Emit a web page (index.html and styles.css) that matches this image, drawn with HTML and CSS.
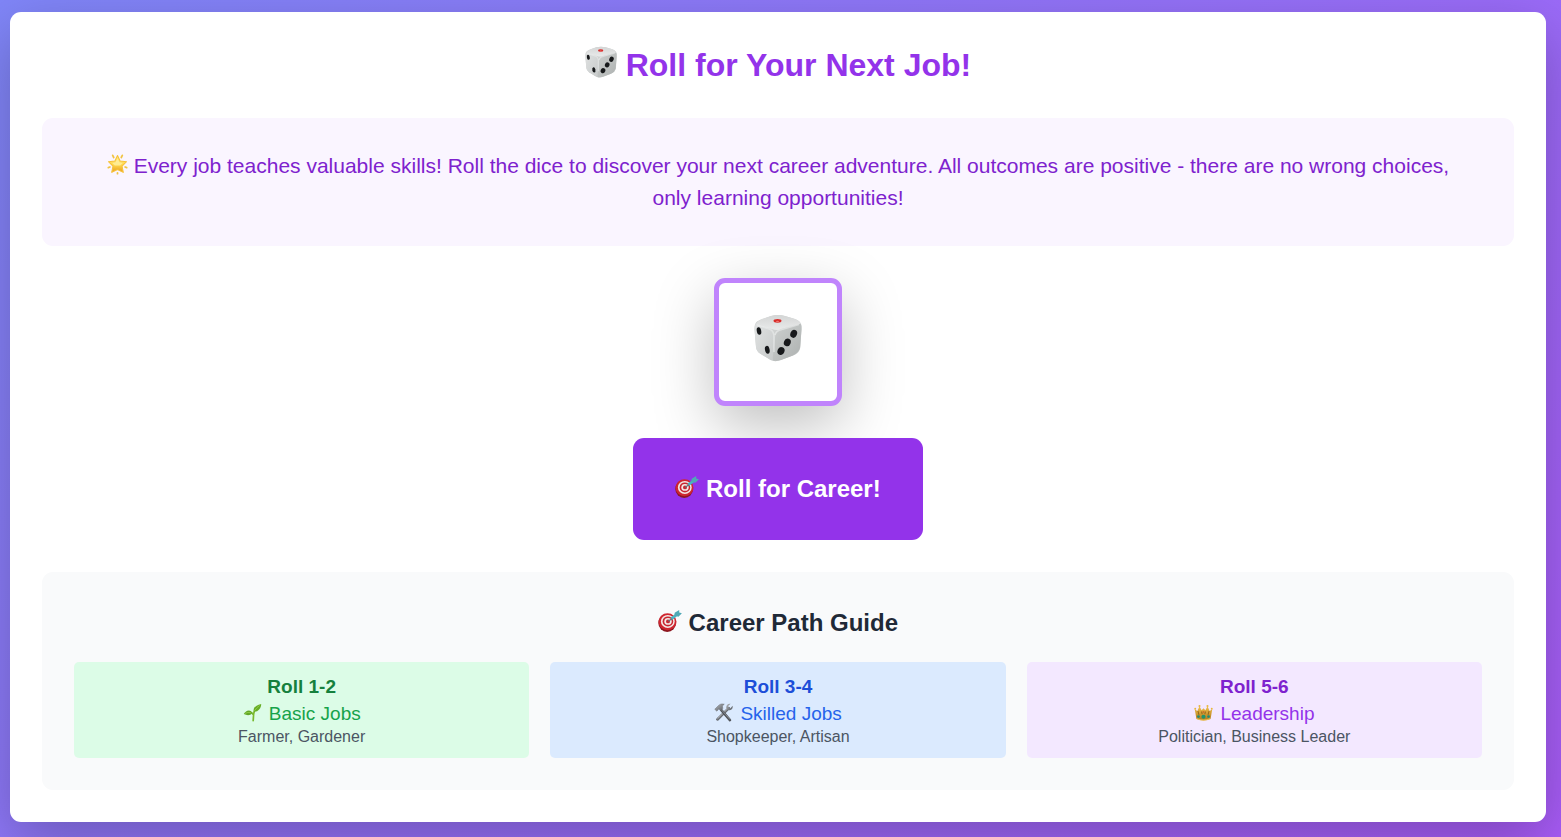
FILE: index.html
```html
<!DOCTYPE html>
<html lang="en">
<head>
<meta charset="utf-8">
<meta name="viewport" content="width=device-width, initial-scale=1">
<title>Roll for Your Next Job!</title>
<link rel="stylesheet" href="styles.css">
</head>
<body>
<svg class="sprite" aria-hidden="true">
  <defs>
    <linearGradient id="dieTop" x1="0" y1="0" x2="0" y2="1"><stop offset="0" stop-color="#d3d5d5"/><stop offset="1" stop-color="#e9eaea"/></linearGradient>
    <linearGradient id="dieLeft" x1="0" y1="0" x2="1" y2="1"><stop offset="0" stop-color="#dfe1e1"/><stop offset="1" stop-color="#c8cbcb"/></linearGradient>
    <linearGradient id="dieRight" x1="0" y1="0" x2="1" y2="1"><stop offset="0" stop-color="#cdd0cf"/><stop offset="1" stop-color="#adb1b0"/></linearGradient>
    <linearGradient id="starFill" x1="0" y1="0" x2="0" y2="1"><stop offset="0" stop-color="#ffe98a"/><stop offset=".55" stop-color="#ffd84e"/><stop offset="1" stop-color="#e89b1c"/></linearGradient>
    <linearGradient id="metal" x1="0" y1="0" x2="1" y2="1"><stop offset="0" stop-color="#b9bcc0"/><stop offset="1" stop-color="#54585e"/></linearGradient>
    <linearGradient id="gold" x1="0" y1="0" x2="0" y2="1"><stop offset="0" stop-color="#efc04a"/><stop offset="1" stop-color="#b07a1d"/></linearGradient>
    <symbol id="die" viewBox="0 0 48 48">
      <path d="M.5 15C.5 9 2 7.500 7 5.500L17 2Q24 0 31 2L41 5C46 7 47.800 9 47.500 15L46.500 32C46 37 44 39.500 39 41.500L27 46Q21 48 16 45.500L6 39.500Q2.500 37 2 33Z" fill="#cfd2d1"/>
      <path d="M1.500 11Q3 7 8 5L17 2Q24 0 31 2L41 5Q46 7 46.800 10Q44 12 38 13L27 15.500Q22 16.500 18 15L7 12.500Z" fill="url(#dieTop)"/>
      <path d="M1.500 10.500L15 15Q19.500 17 19.500 23V41Q19.500 45 19 46.800Q17 46.500 15 45L6 39.500Q2.500 37 2 33L.5 16Q.5 12 1.500 10.500Z" fill="url(#dieLeft)"/>
      <path d="M46.700 9.700L27 15Q22 17 21 24L19 41Q18.500 45 19 46.800Q22 47.800 27 46L39 41.500Q44.500 39 46 34L47.500 16Q47.700 11 46.700 9.700Z" fill="url(#dieRight)"/>
      <path d="M3 11L16 15.200Q20 17 20 23V38M21 21Q22 16.800 27 15.700L45 10.500" fill="none" stroke="#eff0f0" stroke-width="1.600" opacity=".55"/>
      <ellipse cx="23.500" cy="6.800" rx="4" ry="1.900" fill="#d92b29"/><ellipse cx="23.500" cy="7.500" rx="1.500" ry=".8" fill="#ee7772"/>
      <g fill="#17191b"><ellipse cx="5" cy="17" rx="2.200" ry="3.800" transform="rotate(-12 5 17)"/><ellipse cx="13.300" cy="35.800" rx="2.300" ry="4" transform="rotate(-12 13.300 35.800)"/><ellipse cx="39.700" cy="19.800" rx="3.300" ry="4.100" transform="rotate(22 39.700 19.800)"/><ellipse cx="33.300" cy="28.400" rx="3.400" ry="3.900" transform="rotate(22 33.300 28.400)"/><ellipse cx="27" cy="37" rx="3.500" ry="4" transform="rotate(22 27 37)"/></g>
    </symbol>
    <symbol id="star" viewBox="0 0 24 24">
      <g stroke="#f0c445" stroke-width="2" stroke-linecap="round"><path d="M6.500 1.500L7.700 4M17.500 1.500L16.300 4M1.500 15.500L3.300 14.800M22.500 15.500L20.700 14.800M12 21.500V22.500"/></g>
      <path d="M12 1.800L15 7.900L22.300 8.800L17.200 13.900L18.600 21L12 17.700L5.400 21L6.800 13.900L1.700 8.800L9 7.900Z" fill="url(#starFill)" stroke="#f6c23a" stroke-width="1.200" stroke-linejoin="round"/>
      <path d="M12 5L14.200 9.500L18 10.300L15 13H9L6 10.300L9.800 9.500Z" fill="#fff3ad" opacity=".7"/>
    </symbol>
    <symbol id="target" viewBox="0 0 24 24">
      <ellipse cx="9.200" cy="14" rx="8.900" ry="8.900" fill="#8c1720"/>
      <ellipse cx="9.500" cy="12.700" rx="9" ry="8.500" fill="#cf2630"/>
      <ellipse cx="9.800" cy="12.400" rx="6.900" ry="6.500" fill="#f3e9e6"/>
      <ellipse cx="9.900" cy="12.400" rx="5.300" ry="5" fill="#c92731"/>
      <ellipse cx="10" cy="12.400" rx="3.700" ry="3.400" fill="#f3e9e6"/>
      <ellipse cx="10" cy="12.400" rx="2" ry="1.900" fill="#c92731"/>
      <path d="M10.300 12.200L17 7.400" stroke="#5c7780" stroke-width="1.200"/>
      <path d="M13.500 9.700L19 5.500" stroke="#49b3c2" stroke-width="2.800"/>
      <path d="M16.300 6.600L16.700 3.700L21.200 1L21.200 3.400L23.900 4.200L20.400 7.700Z" fill="#4fa9b6"/>
    </symbol>
    <symbol id="seedling" viewBox="0 0 20 20">
      <path d="M10.700 18.600C11.200 14 10.800 11 12 8.500M11 12.500C9.800 10.500 8.500 9.700 7 9" fill="none" stroke="#78b92d" stroke-width="1.800" stroke-linecap="round"/>
      <path d="M11.400 9.200C10.200 5 13.500 2.200 19.200 1C19 5.200 16.500 9.300 11.400 9.200Z" fill="#67ad25"/>
      <path d="M9.700 10.500C7 6.500 3.600 7.200.8 11.700C4.300 13.300 7.700 13.500 9.700 10.500Z" fill="#62a727"/>
      <path d="M12 8.200Q14.500 4.800 17.500 2.500M2.200 11Q5 9.200 8.300 10.200" fill="none" stroke="#9ad34f" stroke-width=".8"/>
    </symbol>
    <symbol id="tools" viewBox="0 0 20 20">
      <path d="M15.600 5.400L3.600 17.300" stroke="#686c72" stroke-width="2.800" stroke-linecap="round"/>
      <path d="M15.200 5.200L3.600 16.700" stroke="#c5c8cc" stroke-width=".9"/>
      <path d="M17.500.8L14.900 3.200L15.500 5L17.200 5.400L19.600 3C20.200 5.800 18.300 7.900 15.500 7.600L12.900 5.200C12.500 2.300 14.600.3 17.500.8Z" fill="url(#metal)"/>
      <path d="M7.300 7L16.800 18" stroke="#4f5359" stroke-width="2.700" stroke-linecap="round"/>
      <path d="M7.900 7.200L16.900 17.400" stroke="#9b9fa5" stroke-width=".8"/>
      <path d="M.8 6.600L4.700 2.700C6.200 1 8.300.6 10.800 1.300L8.800 3.100L9.300 5.600L7.200 7.800L5.100 6.200L3 8.600Z" fill="url(#metal)" stroke="#6d7177" stroke-width=".5"/>
    </symbol>
    <symbol id="crown" viewBox="0 0 20 20">
      <path d="M2.500 16.500L.8 6.500L3.500 8.500L5.800 3.500L8 7.500L10 5.500L12 7.500L14.200 3.500L16.500 8.500L19.200 6.500L17.500 16.500Q10 20 2.500 16.500Z" fill="url(#gold)"/>
      <path d="M4.200 8.500L5.200 12.500M8 9L8.600 11.800M12 9L11.400 11.800M15.800 8.500L14.800 12.500" stroke="#8c6118" stroke-width="1"/>
      <path d="M3 16.600Q10 19.600 17 16.600" fill="none" stroke="#ecbd50" stroke-width="1.200"/>
      <g fill="#e8b73c"><circle cx="1.300" cy="6" r="1"/><circle cx="5.800" cy="3.200" r="1.100"/><circle cx="14.200" cy="3.200" r="1.100"/><circle cx="18.700" cy="6" r="1"/></g>
      <circle cx="10" cy="14.500" r="2.200" fill="#20936c"/><circle cx="4.700" cy="14.300" r="1.500" fill="#268b73"/><circle cx="15.300" cy="14.300" r="1.500" fill="#268b73"/><circle cx="10" cy="9.500" r="1.100" fill="#c9702b"/>
    </symbol>
  </defs>
</svg>

<main class="card">
  <h1 class="title"><svg class="icon" aria-hidden="true"><use href="#die"/></svg> Roll for Your Next Job!</h1>

  <p class="intro"><svg class="icon" aria-hidden="true"><use href="#star"/></svg> Every job teaches valuable skills! Roll the dice to discover your next career adventure. All outcomes are positive - there are no wrong choices, only learning opportunities!</p>

  <div class="die-box"><svg class="die" role="img" aria-label="Die"><use href="#die"/></svg></div>

  <button class="roll" type="button"><svg class="icon" aria-hidden="true"><use href="#target"/></svg> Roll for Career!</button>

  <section class="guide" aria-labelledby="guide-title">
    <h2 class="guide-title" id="guide-title"><svg class="icon" aria-hidden="true"><use href="#target"/></svg> Career Path Guide</h2>
    <div class="paths">
      <article class="path path-basic">
        <h3 class="range">Roll 1-2</h3>
        <p class="kind"><svg class="icon" aria-hidden="true"><use href="#seedling"/></svg> Basic Jobs</p>
        <p class="examples">Farmer, Gardener</p>
      </article>
      <article class="path path-skilled">
        <h3 class="range">Roll 3-4</h3>
        <p class="kind"><svg class="icon" aria-hidden="true"><use href="#tools"/></svg> Skilled Jobs</p>
        <p class="examples">Shopkeeper, Artisan</p>
      </article>
      <article class="path path-leader">
        <h3 class="range">Roll 5-6</h3>
        <p class="kind"><svg class="icon" aria-hidden="true"><use href="#crown"/></svg> Leadership</p>
        <p class="examples">Politician, Business Leader</p>
      </article>
    </div>
  </section>
</main>
</body>
</html>
```

FILE: styles.css
```css
* {
  box-sizing: border-box;
  margin: 0;
}

body {
  min-height: 100vh;
  padding: 12px 15px 15px 10px;
  background: linear-gradient(135deg, #8086f8, #a95cf8);
  font-family: "Liberation Sans", Arial, sans-serif;
}

.sprite {
  position: absolute;
  width: 0;
  height: 0;
}

.icon {
  width: 1em;
  height: 1em;
  vertical-align: -2px;
}

.card {
  display: flex;
  flex-direction: column;
  align-items: center;
  gap: 32px;
  padding: 32px;
  border-radius: 11px;
  background: #fff;
  box-shadow: 0 20px 60px rgba(0, 0, 0, 0.25);
  text-align: center;
}

.title {
  color: #9333ea;
  font-size: 32px;
  line-height: 42px;
}

.intro {
  align-self: stretch;
  padding: 32px 48px;
  border-radius: 11px;
  background: #faf5ff;
  color: #7e22ce;
  font-size: 21px;
  line-height: 32px;
}

.die-box {
  display: grid;
  place-items: center;
  width: 128px;
  height: 128px;
  padding-bottom: 8px;
  border: 5px solid #c084fc;
  border-radius: 11px;
  background: #fff;
  box-shadow: 0 20px 60px rgba(0, 0, 0, 0.25);
}

.die {
  width: 48px;
  height: 48px;
}

.roll {
  position: relative;
  padding: 35px 42px;
  border: 0;
  border-radius: 11px;
  background: #9333ea;
  color: #fff;
  font-family: inherit;
  font-size: 24px;
  font-weight: 700;
  line-height: 32px;
  cursor: pointer;
}

.guide {
  align-self: stretch;
  padding: 32px;
  border-radius: 11px;
  background: #f9fafb;
}

.guide-title {
  margin-bottom: 20px;
  color: #1f2937;
  font-size: 24px;
  line-height: 38px;
}

.paths {
  display: grid;
  grid-template-columns: repeat(3, 1fr);
  gap: 21px;
}

.path {
  padding: 11px;
  border-radius: 5px;
}

.range,
.kind {
  font-size: 19px;
  line-height: 27px;
}

.kind .icon {
  margin-right: 2px;
}

.examples {
  color: #4b5563;
  font-size: 16px;
  line-height: 20px;
}

.path-basic {
  background: #dcfce7;
}

.path-basic .range {
  color: #15803d;
}

.path-basic .kind {
  color: #16a34a;
}

.path-skilled {
  background: #dbeafe;
}

.path-skilled .range {
  color: #1d4ed8;
}

.path-skilled .kind {
  color: #2563eb;
}

.path-leader {
  background: #f3e8ff;
}

.path-leader .range {
  color: #7e22ce;
}

.path-leader .kind {
  color: #9333ea;
}
```
